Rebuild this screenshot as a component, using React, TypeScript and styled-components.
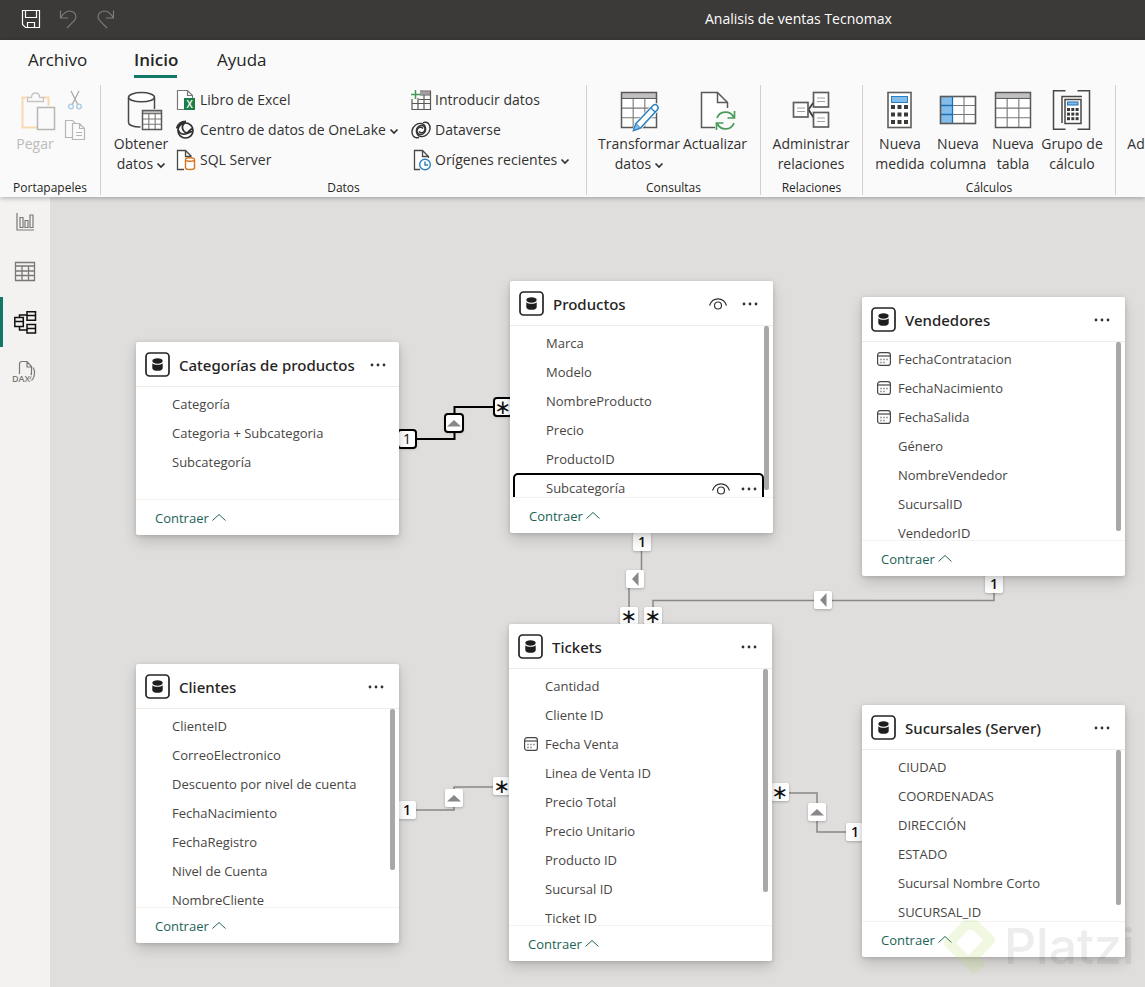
import React from "react";
import styled, { createGlobalStyle, css } from "styled-components";

const sans = `"Open Sans", "Noto Sans", "Liberation Sans", sans-serif`;

const GlobalStyle = createGlobalStyle`
  *, *::before, *::after { box-sizing: border-box; }
  body { margin: 0; font-family: ${sans}; color: #252423; background: #dfdedd; }
  button { font: inherit; color: inherit; border: 0; background: none; padding: 0; cursor: pointer; }
  ul { list-style: none; margin: 0; padding: 0; }
  h2 { margin: 0; }
  svg { display: block; flex: none; overflow: visible; }
`;

const Page = styled.div`
  min-height: 100vh;
  display: flex;
  flex-direction: column;
  overflow: hidden;
`;

/* ---------- title bar ---------- */

const TitleBar = styled.header`
  height: 40px;
  flex: none;
  display: flex;
  align-items: center;
  padding: 0 0 2px 22px;
  background: #3b3a38;
  color: #fff;
`;

const QuickActions = styled.div`
  display: flex;
  gap: 20px;
  width: 683px;
`;

const QuickButton = styled.button<{ $dim?: boolean }>`
  color: ${(p) => (p.$dim ? "#7d7c7a" : "#fff")};
`;

const FileTitle = styled.span`
  font-size: 14px;
  line-height: 20px;
  white-space: nowrap;
`;

/* ---------- ribbon ---------- */

const Ribbon = styled.div`
  position: relative;
  z-index: 2;
  flex: none;
  background: #fafafa;
  box-shadow: 0 1px 5px rgba(0, 0, 0, 0.3);
`;

const Tabs = styled.nav`
  display: flex;
  gap: 40px;
  height: 45px;
  padding-left: 28px;
`;

const Tab = styled.button<{ $active?: boolean; $width: number }>`
  height: 38px;
  width: ${(p) => p.$width}px;
  padding-top: 4px;
  white-space: nowrap;
  font-size: 17px;
  line-height: 31px;
  text-align: left;
  border-bottom: 3px solid ${(p) => (p.$active ? "#117865" : "transparent")};
  font-weight: ${(p) => (p.$active ? 600 : 400)};
`;

const Groups = styled.div`
  display: flex;
  height: 112px;
  padding-bottom: 2px;
  overflow: hidden;
`;

const Group = styled.section<{ $width: number; $pad?: number }>`
  flex: 0 0 ${(p) => p.$width}px;
  display: flex;
  flex-direction: column;
  justify-content: space-between;
  padding-left: ${(p) => p.$pad || 0}px;
  border-right: 1px solid #d2d0ce;
`;

const GroupBody = styled.div`
  display: flex;
`;

const GroupLabel = styled.div<{ $shift?: number }>`
  font-size: 12px;
  line-height: 14px;
  text-align: center;
  margin-left: -${(p) => p.$shift || 0}px;
`;

const BigButton = styled.button<{ $width: number; $disabled?: boolean }>`
  width: ${(p) => p.$width}px;
  padding-top: 5px;
  display: flex;
  flex-direction: column;
  align-items: center;
  gap: 4px;
  font-size: 14px;
  line-height: 20px;
  white-space: nowrap;
  color: ${(p) => (p.$disabled ? "#bdbbb9" : "#323130")};
`;

const ButtonText = styled.span`
  display: flex;
  flex-direction: column;
  align-items: center;
`;

const Inline = styled.span`
  display: inline-flex;
  align-items: center;
  gap: 4px;
`;

const Stack = styled.div<{ $width: number; $inset?: number }>`
  width: ${(p) => p.$width}px;
  padding-left: ${(p) => p.$inset || 0}px;
  display: flex;
  flex-direction: column;
  align-items: flex-start;
`;

const SmallButton = styled.button`
  height: 30px;
  display: flex;
  align-items: center;
  gap: 4px;
  font-size: 14px;
  line-height: 20px;
  white-space: nowrap;
  color: #323130;
`;

/* ---------- workspace ---------- */

const Workspace = styled.div`
  flex: 1;
  display: flex;
`;

const SideNav = styled.nav`
  flex: 0 0 50px;
  background: #f3f2f1;
`;

const SideButton = styled.button<{ $active?: boolean }>`
  width: 50px;
  height: 50px;
  display: flex;
  align-items: center;
  justify-content: center;
  padding-bottom: 1px;
  color: ${(p) => (p.$active ? "#111" : "#7a7876")};
  border-left: 3px solid ${(p) => (p.$active ? "#117865" : "transparent")};
  border-right: 3px solid transparent;
`;

const Canvas = styled.main`
  position: relative;
  flex: 1;
  min-height: 790px;
  overflow: hidden;
  background: #dfdedd;
`;

const Edges = styled.svg`
  position: absolute;
  inset: 0;
  width: 100%;
  height: 100%;
`;

const Badge = styled.div<{ $x: number; $y: number; $selected?: boolean }>`
  position: absolute;
  left: ${(p) => p.$x}px;
  top: ${(p) => p.$y}px;
  width: 18px;
  height: 18px;
  display: flex;
  align-items: center;
  justify-content: center;
  border-radius: 2px;
  background: #fff;
  color: #111;
  font-size: 14px;
  font-weight: 600;
  line-height: 18px;
  box-shadow: 0 1px 3px rgba(0, 0, 0, 0.25);
  ${(p) =>
    p.$selected &&
    css`
      font-weight: 400;
      outline: 2px solid #000;
      outline-offset: -1px;
      border-radius: 3px;
    `}
`;

const Star = styled.span`
  font-family: "DejaVu Sans", sans-serif;
  font-size: 20px;
  font-weight: 400;
  line-height: 18px;
`;

const Card = styled.article<{ $x: number; $y: number; $h: number }>`
  position: absolute;
  left: ${(p) => p.$x}px;
  top: ${(p) => p.$y}px;
  width: 263px;
  height: ${(p) => p.$h}px;
  display: flex;
  flex-direction: column;
  background: #fff;
  border-radius: 2px;
  box-shadow: 0 6px 14px rgba(0, 0, 0, 0.16), 0 1px 4px rgba(0, 0, 0, 0.14);
`;

const CardHeader = styled.header`
  flex: none;
  height: 45px;
  display: flex;
  align-items: center;
  padding: 0 15px 0 9px;
  border-bottom: 1px solid #edebe9;
`;

const CardTitle = styled.h2`
  flex: 1;
  margin-left: 9px;
  font-family: "Noto Sans", "Open Sans", sans-serif;
  font-size: 15px;
  line-height: 24px;
  padding-top: 2px;
  font-weight: 500;
  white-space: nowrap;
`;

const IconButton = styled.button<{ $gap?: number }>`
  margin-left: ${(p) => p.$gap ?? 15}px;
  padding-top: 2px;
  color: #323130;
`;

const Fields = styled.ul`
  position: relative;
  flex: 1;
  min-height: 0;
  overflow: hidden;
  padding-top: 2px;
`;

const Field = styled.li<{ $selected?: boolean }>`
  display: flex;
  align-items: center;
  height: 29px;
  margin: 0 9px 0 3px;
  padding-left: 12px;
  font-size: 13px;
  line-height: 20px;
  color: #484644;
  white-space: nowrap;
  ${(p) =>
    p.$selected &&
    css`
      box-shadow: inset 0 0 0 2px #000;
      border-radius: 5px;
      padding-right: 7px;
    `}
`;

const FieldIcon = styled.span`
  width: 21px;
`;

const FieldName = styled.span`
  flex: 1;
`;

const Thumb = styled.div<{ $h: number }>`
  position: absolute;
  top: 0;
  right: 4px;
  width: 5px;
  height: ${(p) => p.$h}px;
  border-radius: 2px;
  background: #a9a8a7;
`;

const CardFooter = styled.footer`
  flex: none;
  height: 36px;
  padding-left: 19px;
  border-top: 1px solid #f3f2f1;
  display: flex;
  align-items: center;
`;

const Collapse = styled.button`
  display: flex;
  align-items: center;
  gap: 3px;
  font-size: 13px;
  line-height: 20px;
  color: #1c6357;
`;

const Watermark = styled.div`
  position: absolute;
  left: 892px;
  top: 717px;
  display: flex;
  align-items: center;
  gap: 6px;
  pointer-events: none;
  font-family: Inter, "Liberation Sans", sans-serif;
  font-size: 50px;
  font-weight: 500;
  line-height: 64px;
  color: rgba(60, 60, 60, 0.09);
`;

/* ---------- icons ---------- */

type Box = { w: number; h: number; children: React.ReactNode };
const Svg = ({ w, h, children }: Box) => (
  <svg width={w} height={h} viewBox={`0 0 ${w} ${h}`} fill="none" stroke="currentColor" aria-hidden="true">
    {children}
  </svg>
);

const Chevron = () => (
  <Svg w={8} h={8}>
    <path d="M.5 3.500L4 7l3.500-3.500" strokeWidth="1.700" />
  </Svg>
);

const SaveIcon = () => (
  <Svg w={18} h={18}>
    <path d="M.5.5h17v17H3.500l-3-3z M3.500.5v7h11v-7 M5.500 17.500v-5h7v5" strokeWidth="1.200" />
  </Svg>
);
const UndoIcon = () => (
  <Svg w={17} h={18}>
    <path d="M.5 .5v7.500h7.500 M.5 8C3.500 3 6.500 1 9.500 1c3.500 0 6.500 2.500 6.500 5.800 0 2-1 3.200-2.200 4.400L7 18" strokeWidth="1.200" />
  </Svg>
);
const RedoIcon = () => (
  <Svg w={17} h={18}>
    <path d="M16.500 .5v7.500H9 M16.500 8C13.500 3 10.500 1 7.500 1 4 1 1 3.500 1 6.800c0 2 1 3.200 2.200 4.400L10 18" strokeWidth="1.200" />
  </Svg>
);

const PasteIcon = () => (
  <Svg w={40} h={40}>
    <path d="M13 7.500H7.500v30H22M28 7.500h5.500V16" stroke="#f7d9b0" strokeWidth="2" />
    <path d="M12.500 11.500V7.500h4c0-6 8-6 8 0h4v4z" stroke="#c8c6c4" fill="#fafafa" strokeWidth="1.300" />
    <rect x="22.500" y="17.500" width="17" height="22" stroke="#b8b6b4" fill="#fafafa" strokeWidth="1.500" />
  </Svg>
);
const CutIcon = () => (
  <Svg w={20} h={20}>
    <path d="M6 1l6.500 13M14 1L7.500 14" stroke="#a8a6a4" strokeWidth="1.200" />
    <circle cx="6" cy="16.500" r="2.300" stroke="#a6c9e2" strokeWidth="1.300" />
    <circle cx="14" cy="16.500" r="2.300" stroke="#a6c9e2" strokeWidth="1.300" />
  </Svg>
);
const CopyIcon = () => (
  <Svg w={20} h={20}>
    <g stroke="#b8b6b4" strokeWidth="1.200">
      <path d="M7 17.500H.5V.5h7l3 3" />
      <path d="M7.500 3.500h7l5 5v11h-12z M14.500 3.500v5h5 M11 12.500h6 M11 15.500h6" />
    </g>
  </Svg>
);

const GridMark = ({ x, y, s }: { x: number; y: number; s: number }) => {
  const a = s / 3;
  const top = y + s * 0.17;
  const r = (s * 0.83) / 3;
  return (
    <g>
      <rect x={x} y={y} width={s} height={s} fill="#fff" stroke="none" />
      <rect x={x} y={y} width={s} height={s * 0.17} fill="#c3c1bf" stroke="none" />
      <path
        d={`M${x + a} ${top}V${y + s}M${x + 2 * a} ${top}V${y + s}M${x} ${top + r}H${x + s}M${x} ${top + 2 * r}H${x + s}`}
        stroke="#7a7876"
        strokeWidth="1.100"
      />
      <path d={`M${x} ${top}H${x + s}`} stroke="#5b5957" strokeWidth="1" />
      <rect x={x} y={y} width={s} height={s} stroke="#5b5957" strokeWidth="1.500" />
    </g>
  );
};

const DatabaseIcon = () => (
  <Svg w={40} h={40}>
    <g stroke="#4a4846" strokeWidth="1.500">
      <ellipse cx="20.500" cy="7.200" rx="13" ry="4.600" fill="#fff" />
      <path d="M7.500 7.500v25c0 2.500 5 4.400 12 4.600M33.500 7.500V19" />
    </g>
    <GridMark x={21.5} y={20.5} s={19} />
  </Svg>
);
const TransformIcon = () => (
  <Svg w={40} h={40}>
    <GridMark x={2.5} y={2.5} s={35} />
    <path d="M17 34L34 15.500c3-2.500 6.500 1 4.500 4L22 37.500l-7 3z" stroke="#fafafa" fill="#fafafa" strokeWidth="3" />
    <path d="M17 33.500L34 15.500c3-2.500 6.500 1 4.500 4L21.500 38l-7 2.500z" stroke="#2a80bf" fill="#fff" strokeWidth="1.500" />
    <path d="M17 33.500l4.500 4.500-7 2.500z" fill="#83bdeb" stroke="#2a80bf" />
    <path d="M32 18l4 4" stroke="#2a80bf" strokeWidth="1.200" />
  </Svg>
);
const RefreshIcon = () => (
  <Svg w={40} h={40}>
    <path d="M20 37.500H6.500v-35h16l10 10V18" fill="#fff" stroke="#5b5957" strokeWidth="1.500" />
    <path d="M22.500 2.500v10h10" stroke="#5b5957" strokeWidth="1.500" />
    <circle cx="30.500" cy="30.500" r="11" fill="#fafafa" stroke="none" />
    <path d="M22 28a9 9 0 0 1 16.500-1M39.500 21v7h-7M39 33a9 9 0 0 1-16.500 1M21.500 40v-7h7" stroke="#4a9a5a" strokeWidth="1.700" />
  </Svg>
);
const RelationsIcon = () => (
  <Svg w={40} h={40}>
    <path d="M22.500 12.500l-5 7 5 8" stroke="#3b3a38" strokeWidth="1.800" />
    <g stroke="#605e5c" fill="#fff" strokeWidth="1.700">
      <rect x="2.500" y="12.500" width="14.500" height="14.500" />
      <rect x="22.500" y="2.500" width="15" height="14.500" />
      <rect x="22.500" y="22.500" width="15" height="14.500" />
    </g>
    <path d="M6 18h8M6 21.500h8M26 8h8M26 11.500h8M26 28h8M26 31.500h8" stroke="#a3a1a0" strokeWidth="1.200" />
  </Svg>
);
const keys = [0, 1, 2];
const MeasureIcon = () => (
  <Svg w={40} h={40}>
    <rect x="8" y="2.500" width="23" height="35" fill="#fff" stroke="#605e5c" strokeWidth="1.600" />
    <rect x="11.500" y="6.500" width="16" height="6" fill="#83bdeb" stroke="#2a80bf" />
    {keys.map((r) =>
      keys.map((c) => <rect key={`${r}${c}`} x={11 + c * 6.5} y={15 + r * 7.5} width="4" height="4" fill="#3b3a38" stroke="none" />)
    )}
  </Svg>
);
const ColumnIcon = () => (
  <Svg w={40} h={40}>
    <rect x="2.500" y="6.500" width="35" height="27" fill="#fff" stroke="none" />
    <rect x="2.500" y="6.500" width="12" height="27" fill="#83bdeb" stroke="none" />
    <path d="M26 7v26M15 15.500h22M15 24.500h22" stroke="#7a7876" strokeWidth="1.100" />
    <rect x="2.500" y="6.500" width="35" height="27" stroke="#5b5957" strokeWidth="1.600" />
    <path d="M14.500 6v28M3 15.500h12M3 24.500h12" stroke="#1f6fb0" strokeWidth="1.300" />
  </Svg>
);
const TableIcon = () => (
  <Svg w={40} h={40}>
    <GridMark x={2.5} y={2.5} s={35} />
  </Svg>
);
const CalcGroupIcon = () => (
  <Svg w={40} h={40}>
    <path d="M13.500.8H1.500v38.500h12M25.500.8h12v38.500h-12" stroke="#4a4846" strokeWidth="1.500" />
    <path d="M10 33V6.500h20" stroke="#4a4846" strokeWidth="1.500" />
    <rect x="13" y="9.500" width="16" height="24" fill="#fff" stroke="#4a4846" strokeWidth="1.500" />
    <rect x="15.500" y="12" width="10.500" height="3" fill="#83bdeb" stroke="#1f6fb0" />
    {keys.map((r) =>
      keys.map((c) => <rect key={`${r}${c}`} x={15 + c * 4.3} y={18 + r * 4.6} width="3" height="3" fill="#3b3a38" stroke="none" />)
    )}
  </Svg>
);

const ExcelIcon = () => (
  <Svg w={20} h={20}>
    <path d="M8 19.500H1.500V.5h10l5 5V8M11.500.5v5h5" stroke="#7a7876" strokeWidth="1.200" fill="#fff" />
    <rect x="8" y="8" width="11" height="12" fill="#1b7f45" stroke="none" />
    <text x="13.500" y="17.500" textAnchor="middle" fontSize="10" fontWeight="600" fill="#fff" stroke="none">X</text>
  </Svg>
);
const OneLakeIcon = () => (
  <Svg w={20} h={20}>
    <g stroke="#323130">
      <circle cx="9.500" cy="10.500" r="7.500" strokeWidth="1.700" />
      <path d="M1 8.500C2 5 5 2 10 1.800" strokeWidth="2.600" />
      <path d="M8.500 3C5 6 6 11 10.500 13M10.500 13.500l5.500-5M2 9.500c1.500 4.500 5 5.500 9 4 2.500-1 4-2 6-2" strokeWidth="1.700" />
    </g>
  </Svg>
);
const SqlIcon = () => (
  <Svg w={20} h={20}>
    <path d="M8 19.500H1.500V.5h8l6 6M9.500.5v6h6" stroke="#4a4846" strokeWidth="1.300" fill="#fff" />
    <path d="M9.500 9.500v8.500c0 2 9 2 9 0V9.500" fill="#fff" stroke="#d8741a" strokeWidth="1.400" />
    <ellipse cx="14" cy="9.500" rx="4.500" ry="1.800" fill="#fff" stroke="#d8741a" strokeWidth="1.400" />
  </Svg>
);
const EnterDataIcon = () => (
  <Svg w={20} h={20}>
    <path d="M9 3h10" stroke="#a19f9d" strokeWidth="3" />
    <path d="M9 1h10.500v18.500H1V9M1 13.500h18M8 9.500h11M7 8v11M13 5v14M9 5h10" stroke="#5b5957" strokeWidth="1.200" />
    <path d="M4.500 0v9M0 4.500h9" stroke="#3f9a52" strokeWidth="1.500" />
  </Svg>
);
const DataverseIcon = () => (
  <Svg w={20} h={20}>
    <g stroke="#323130" strokeWidth="1.400">
      <path d="M8 17.300C3.500 19 .5 15.500 1 11S6 2.500 10.500 3.500s5.500 7.500 2 10-7 0-6.500-3 4-4.500 6-2" />
      <path d="M12 2.700c4.500-1.700 7.500 1.800 7 6.300s-5 8.500-9.500 7.500-5.500-7.500-2-10 7 0 6.500 3-4 4.500-6 2" />
    </g>
  </Svg>
);
const RecentIcon = () => (
  <Svg w={20} h={20}>
    <path d="M9 19.500H3.500V.5h8l6 6V8M11.500.5v6h6" stroke="#4a4846" strokeWidth="1.300" fill="#fff" />
    <circle cx="14" cy="14.500" r="5.300" fill="#fff" stroke="#2a80bf" strokeWidth="1.400" />
    <path d="M14 11.500v3.500h3" stroke="#2a80bf" strokeWidth="1.400" />
  </Svg>
);

const ReportViewIcon = () => (
  <Svg w={18} h={18}>
    <path d="M1 0v17H18M4 4.500h3v10H4zM9 7.500h3v7H9zM14 2h3v12.500h-3z" strokeWidth="1.200" />
  </Svg>
);
const TableViewIcon = () => (
  <Svg w={20} h={20}>
    <path d="M.5.5h19v18H.5zM.5 4h19M.5 9h19M.5 13.500h19M7 4v14.500M13.500 4v14.500" strokeWidth="1.300" />
  </Svg>
);
const ModelViewIcon = () => (
  <Svg w={22} h={22}>
    <path d="M.8 6.500h8.500v9H.8zM.8 10.500h8.500M13 .8h8.500v8.500H13zM13 4.500h8.500M13 13.500h8.500V22H13zM13 17.500h8.500M5.500 6.500V4H13M5.500 15.500V19H13" strokeWidth="1.500" />
  </Svg>
);
const DaxIcon = () => (
  <Svg w={22} h={22}>
    <path d="M5.500 13V3c0-1.500 1-2.500 2.500-2.500h5l4.500 5v5c0 5-.5 6-2 8M13 .5V6h4.500M19 6.500c1 1.500 1.500 3 1.500 4.500 0 4-.5 6.500-3 8.500" strokeWidth="1.200" />
    <text x="-2" y="20.500" fontSize="9" fontWeight="600" fill="currentColor" stroke="#f3f2f1" strokeWidth="2" paintOrder="stroke">DAX</text>
  </Svg>
);

const TableBadge = () => (
  <Svg w={25} h={25}>
    <rect x="1" y="1" width="23" height="23" rx="3.500" stroke="#252423" strokeWidth="1.700" />
    <g fill="#1f1e1d" stroke="none">
      <ellipse cx="12.500" cy="9" rx="5.200" ry="2.700" />
      <path d="M7.300 11.300c2 2 8.400 2 10.400 0v5c0 3.400-10.400 3.400-10.400 0z" />
    </g>
  </Svg>
);
const Dots = () => (
  <Svg w={16} h={4}>
    <g fill="currentColor" stroke="none">
      <circle cx="2" cy="2" r="1.400" />
      <circle cx="8" cy="2" r="1.400" />
      <circle cx="14" cy="2" r="1.400" />
    </g>
  </Svg>
);
const Eye = () => (
  <Svg w={18} h={12}>
    <path d="M.5 7.500C2 3 5.500.8 9 .8s7 2.200 8.500 6.700" strokeWidth="1.200" />
    <circle cx="9" cy="7.500" r="3.500" strokeWidth="1.200" />
  </Svg>
);
const CalendarIcon = () => (
  <Svg w={14} h={14}>
    <rect x=".6" y=".6" width="12.800" height="12.800" rx="2.500" strokeWidth="1.200" />
    <path d="M1 4h12" strokeWidth="1.200" />
    <path d="M6.500 7.500h1M9.500 7.500h1M3.500 10.500h1M6.500 10.500h1M3.500 7.500h1" strokeWidth="1.300" />
  </Svg>
);
const CaretUp = () => (
  <Svg w={14} h={8}>
    <path d="M.5 6.500L7 .5l6.500 6" strokeWidth="1" />
  </Svg>
);
const Direction = ({ left }: { left?: boolean }) => (
  <Svg w={14} h={14}>
    <path d={left ? "M4 7L10.500 0v14z" : "M0 10.500l7-6.500 7 6.500z"} fill="#8a8886" stroke="none" />
  </Svg>
);

/* ---------- data ---------- */

type FieldDef = { name: string; date?: boolean; selected?: boolean };
type TableDef = { title: string; x: number; y: number; h: number; thumb?: number; visible?: boolean; fields: FieldDef[] };
const names = (...list: string[]): FieldDef[] => list.map((name) => ({ name }));

const tables: TableDef[] = [
  { title: "Categorías de productos", x: 86, y: 145, h: 193, fields: names("Categoría", "Categoria + Subcategoria", "Subcategoría") },
  {
    title: "Productos", x: 460, y: 84, h: 252, thumb: 164, visible: true,
    fields: [...names("Marca", "Modelo", "NombreProducto", "Precio", "ProductoID"), { name: "Subcategoría", selected: true }],
  },
  {
    title: "Vendedores", x: 812, y: 100, h: 279, thumb: 189,
    fields: [
      { name: "FechaContratacion", date: true },
      { name: "FechaNacimiento", date: true },
      { name: "FechaSalida", date: true },
      ...names("Género", "NombreVendedor", "SucursalID", "VendedorID"),
    ],
  },
  {
    title: "Tickets", x: 459, y: 427, h: 337, thumb: 223,
    fields: [
      ...names("Cantidad", "Cliente ID"),
      { name: "Fecha Venta", date: true },
      ...names("Linea de Venta ID", "Precio Total", "Precio Unitario", "Producto ID", "Sucursal ID", "Ticket ID"),
    ],
  },
  {
    title: "Clientes", x: 86, y: 467, h: 279, thumb: 161,
    fields: names("ClienteID", "CorreoElectronico", "Descuento por nivel de cuenta", "FechaNacimiento", "FechaRegistro", "Nivel de Cuenta", "NombreCliente"),
  },
  {
    title: "Sucursales (Server)", x: 812, y: 508, h: 252, thumb: 155,
    fields: names("CIUDAD", "COORDENADAS", "DIRECCIÓN", "ESTADO", "Sucursal Nombre Corto", "SUCURSAL_ID"),
  },
];

type BadgeDef = { x: number; y: number; kind: "one" | "many" | "up" | "left"; selected?: boolean };
const badges: BadgeDef[] = [
  { x: 348, y: 233, kind: "one", selected: true },
  { x: 395, y: 217, kind: "up", selected: true },
  { x: 444, y: 201, kind: "many", selected: true },
  { x: 583, y: 336, kind: "one" },
  { x: 576, y: 373, kind: "left" },
  { x: 570, y: 410, kind: "many" },
  { x: 594, y: 410, kind: "many" },
  { x: 764, y: 394, kind: "left" },
  { x: 935, y: 378, kind: "one" },
  { x: 348, y: 604, kind: "one" },
  { x: 395, y: 592, kind: "up" },
  { x: 443, y: 580, kind: "many" },
  { x: 721, y: 586, kind: "many" },
  { x: 758, y: 606, kind: "up" },
  { x: 796, y: 626, kind: "one" },
];

const badgeContent = {
  one: "1",
  many: <Star>∗</Star>,
  up: <Direction />,
  left: <Direction left />,
};

const ModelTable = ({ table }: { table: TableDef }) => (
  <Card $x={table.x} $y={table.y} $h={table.h}>
    <CardHeader>
      <TableBadge />
      <CardTitle>{table.title}</CardTitle>
      {table.visible && (
        <IconButton aria-label="Visibilidad">
          <Eye />
        </IconButton>
      )}
      <IconButton aria-label="Más opciones">
        <Dots />
      </IconButton>
    </CardHeader>
    <Fields>
      {table.fields.map((f) => (
        <Field key={f.name} $selected={f.selected}>
          <FieldIcon>{f.date && <CalendarIcon />}</FieldIcon>
          <FieldName>{f.name}</FieldName>
          {f.selected && (
            <>
              <IconButton $gap={11} aria-label="Visibilidad">
                <Eye />
              </IconButton>
              <IconButton $gap={11} aria-label="Más opciones">
                <Dots />
              </IconButton>
            </>
          )}
        </Field>
      ))}
      {table.thumb && <Thumb as="li" aria-hidden="true" $h={table.thumb} />}
    </Fields>
    <CardFooter>
      <Collapse>
        Contraer <CaretUp />
      </Collapse>
    </CardFooter>
  </Card>
);

const Big = (p: { icon: React.ReactNode; lines: string[]; width: number; menu?: boolean; disabled?: boolean }) => (
  <BigButton $width={p.width} $disabled={p.disabled}>
    {p.icon}
    <ButtonText>
      {p.lines.map((line, i) => (
        <Inline key={line}>
          {line}
          {p.menu && i === p.lines.length - 1 && <Chevron />}
        </Inline>
      ))}
    </ButtonText>
  </BigButton>
);

const Small = (p: { icon: React.ReactNode; label: string; menu?: boolean }) => (
  <SmallButton>
    {p.icon}
    <Inline>
      {p.label}
      {p.menu && <Chevron />}
    </Inline>
  </SmallButton>
);

export default function App() {
  return (
    <Page>
      <GlobalStyle />
      <TitleBar>
        <QuickActions>
          <QuickButton aria-label="Guardar"><SaveIcon /></QuickButton>
          <QuickButton aria-label="Deshacer" $dim><UndoIcon /></QuickButton>
          <QuickButton aria-label="Rehacer" $dim><RedoIcon /></QuickButton>
        </QuickActions>
        <FileTitle>Analisis de ventas Tecnomax</FileTitle>
      </TitleBar>

      <Ribbon>
        <Tabs>
          <Tab $width={66}>Archivo</Tab>
          <Tab $width={43} $active>Inicio</Tab>
          <Tab $width={50}>Ayuda</Tab>
        </Tabs>
        <Groups>
          <Group $width={101} $pad={8}>
            <GroupBody>
              <Big width={54} icon={<PasteIcon />} lines={["Pegar"]} disabled />
              <Stack $width={26} $inset={3}>
                <SmallButton aria-label="Cortar"><CutIcon /></SmallButton>
                <SmallButton aria-label="Copiar"><CopyIcon /></SmallButton>
              </Stack>
            </GroupBody>
            <GroupLabel $shift={8}>Portapapeles</GroupLabel>
          </Group>
          <Group $width={486} $pad={5}>
            <GroupBody>
              <Big width={70} icon={<DatabaseIcon />} lines={["Obtener", "datos"]} menu />
              <Stack $width={235}>
                <Small icon={<ExcelIcon />} label="Libro de Excel" />
                <Small icon={<OneLakeIcon />} label="Centro de datos de OneLake" menu />
                <Small icon={<SqlIcon />} label="SQL Server" />
              </Stack>
              <Stack $width={170}>
                <Small icon={<EnterDataIcon />} label="Introducir datos" />
                <Small icon={<DataverseIcon />} label="Dataverse" />
                <Small icon={<RecentIcon />} label="Orígenes recientes" menu />
              </Stack>
            </GroupBody>
            <GroupLabel $shift={5}>Datos</GroupLabel>
          </Group>
          <Group $width={174} $pad={12}>
            <GroupBody>
              <Big width={80} icon={<TransformIcon />} lines={["Transformar", "datos"]} menu />
              <Big width={72} icon={<RefreshIcon />} lines={["Actualizar"]} />
            </GroupBody>
            <GroupLabel $shift={12}>Consultas</GroupLabel>
          </Group>
          <Group $width={102}>
            <GroupBody>
              <Big width={100} icon={<RelationsIcon />} lines={["Administrar", "relaciones"]} />
            </GroupBody>
            <GroupLabel>Relaciones</GroupLabel>
          </Group>
          <Group $width={253} $pad={9}>
            <GroupBody>
              <Big width={56} icon={<MeasureIcon />} lines={["Nueva", "medida"]} />
              <Big width={60} icon={<ColumnIcon />} lines={["Nueva", "columna"]} />
              <Big width={50} icon={<TableIcon />} lines={["Nueva", "tabla"]} />
              <Big width={68} icon={<CalcGroupIcon />} lines={["Grupo de", "cálculo"]} />
            </GroupBody>
            <GroupLabel $shift={9}>Cálculos</GroupLabel>
          </Group>
          <Group $width={60} $pad={11}>
            <GroupBody>
              <Big width={18} icon={<Svg w={18} h={40}>{null}</Svg>} lines={["Ad"]} />
            </GroupBody>
          </Group>
        </Groups>
      </Ribbon>

      <Workspace>
        <SideNav>
          <SideButton aria-label="Vista de informe"><ReportViewIcon /></SideButton>
          <SideButton aria-label="Vista de tabla"><TableViewIcon /></SideButton>
          <SideButton aria-label="Vista de modelo" $active><ModelViewIcon /></SideButton>
          <SideButton aria-label="Vista de consultas"><DaxIcon /></SideButton>
        </SideNav>
        <Canvas>
          <Edges fill="none" stroke="#8a8886" strokeWidth="1.500" aria-hidden="true">
            <path d="M366 242h38.500v-32H445" stroke="#000" strokeWidth="2" />
            <path d="M591.500 354v20M579 391v20" />
            <path d="M603 412v-8.500H944V396" />
            <path d="M366 613h38v-23h40" />
            <path d="M739 596h28v39h29" />
          </Edges>
          {badges.map((b) => (
            <Badge key={`${b.x}-${b.y}`} $x={b.x} $y={b.y} $selected={b.selected}>
              {badgeContent[b.kind]}
            </Badge>
          ))}
          {tables.map((t) => (
            <ModelTable key={t.title} table={t} />
          ))}
          <Watermark>
            <svg width="56" height="64" viewBox="0 0 56 64" fill="none" stroke="#b4d95c" strokeWidth="10" strokeLinejoin="round" strokeLinecap="round" opacity="0.18" aria-hidden="true">
              <path d="M31 44L48 26 33 11H24L7 29 32 54 37 50" />
            </svg>
            Platzi
          </Watermark>
        </Canvas>
      </Workspace>
    </Page>
  );
}
